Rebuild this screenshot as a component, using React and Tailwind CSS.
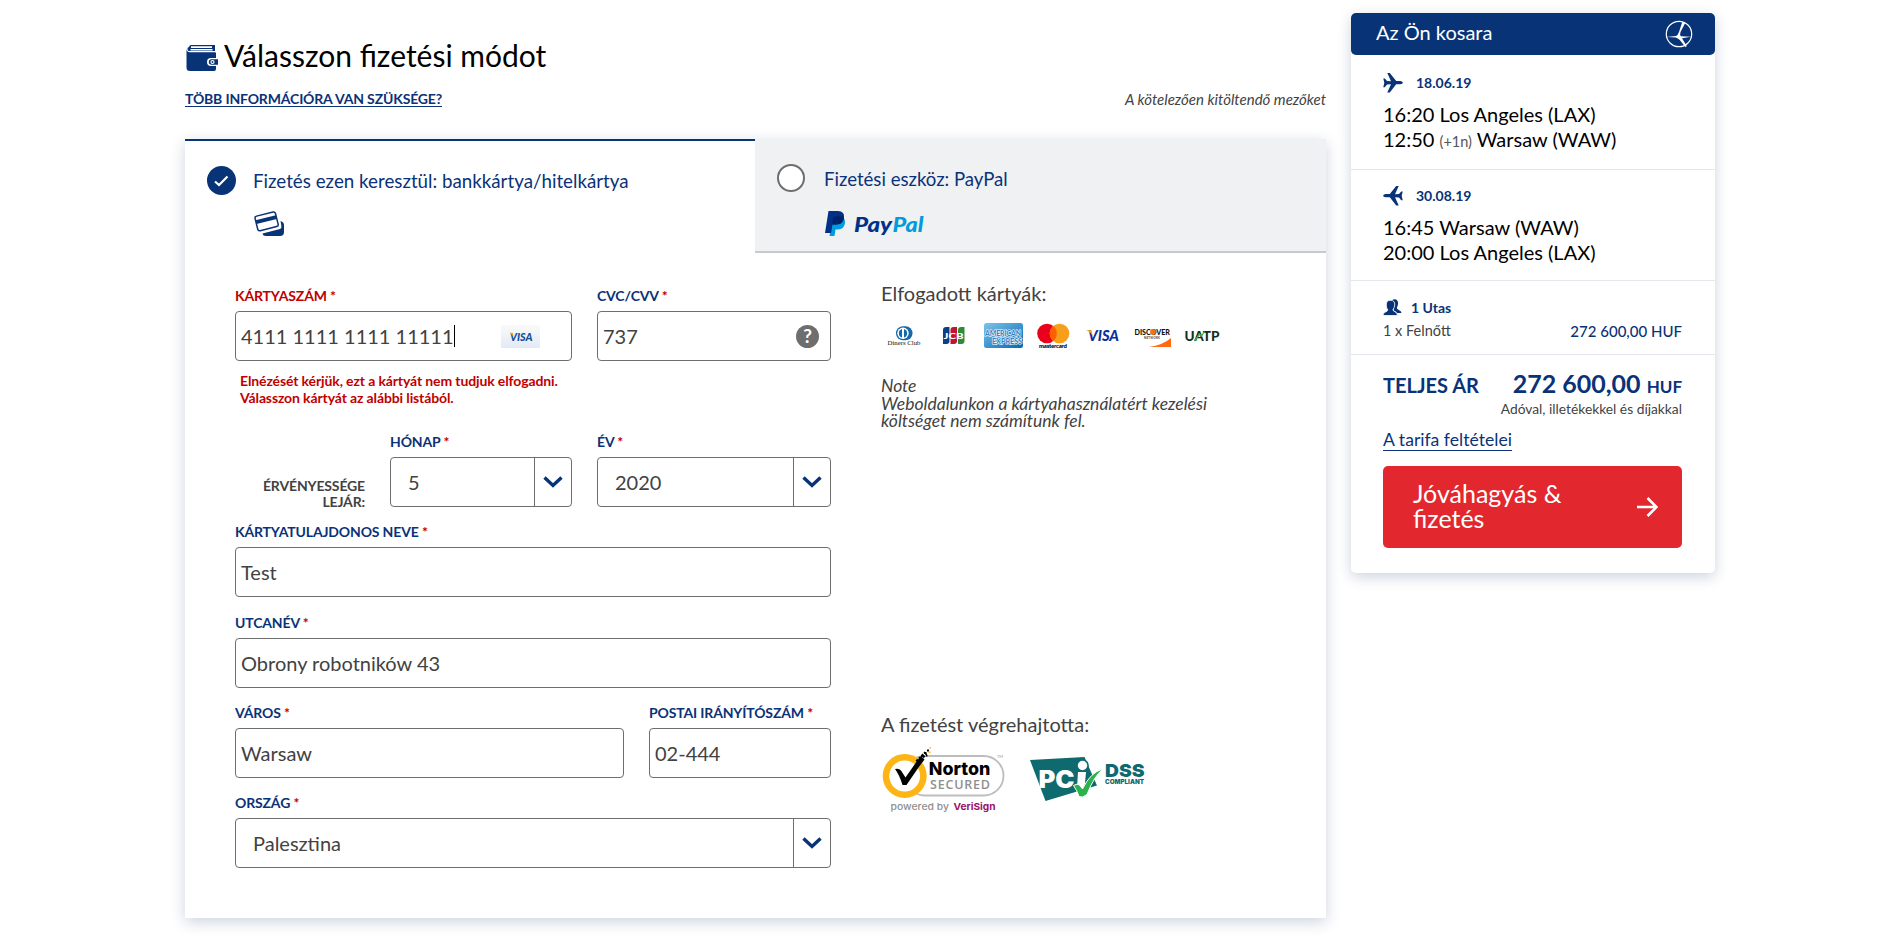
const NAVY = '#083377';

function Label({ children, className = '' }) {
  return (
    <div className={`h-5 whitespace-nowrap text-[14px] leading-5 font-bold tracking-[-0.15px] ${className || 'text-[#0a3278]'}`}>
      {children}
      <span className="text-[#c00000]"> *</span>
    </div>
  );
}

function Input({ children }) {
  return (
    <div className="flex h-[50px] items-center rounded-[4px] border border-[#6e6e6e] pl-[5px] text-[20px] leading-6 whitespace-nowrap text-[#424242]">
      {children}
    </div>
  );
}

function Select({ children }) {
  return (
    <div className="flex h-[50px] rounded-[4px] border border-[#6e6e6e] text-[20px] text-[#424242]">
      <div className="flex flex-1 items-center pl-[17px] leading-6">{children}</div>
      <div className="flex w-[37px] items-center justify-center border-l border-[#6e6e6e]">
        <svg width="20" height="12" viewBox="0 0 20 12" fill="none" stroke={NAVY} strokeWidth="3.4">
          <path d="M1.500 1.500 10 9.500l8.500-8" />
        </svg>
      </div>
    </div>
  );
}

function Wallet() {
  return (
    <svg width="32" height="26" viewBox="0 0 32 26">
      <path fill={NAVY} d="M5 0h24v6H4a2 2 0 0 1-1-4Q3.500 0 5 0Z" />
      <path stroke="#fff" strokeWidth="1.600" d="M5 2.100h21M4.500 4.700h22" />
      <path fill={NAVY} d="M.5 4Q1 7.300 4 7.300h25a1 1 0 0 1 1 1V13h-5a4 4 0 0 0 0 8h5v3a2 2 0 0 1-2 2H4a3.500 3.500 0 0 1-3.500-3.500Z" />
      <path fill={NAVY} d="M25.500 14.300H32v5.400h-6.500a2.700 2.700 0 0 1 0-5.400Z" />
      <circle cx="26.500" cy="17" r="1.500" fill={NAVY} stroke="#fff" strokeWidth="1.200" />
    </svg>
  );
}

function CardsIcon() {
  return (
    <svg width="31" height="26" viewBox="0 0 31 26">
      <path fill={NAVY} d="M26.500 10q3.500 1 3.500 4v7q0 4-4 4H12q-3 0-3.500-2.500L26 18q2-1 1.300-3.500Z" />
      <g transform="rotate(-14 12 10)">
        <rect x="2" y="3" width="21" height="15" rx="2" fill="#fff" stroke={NAVY} strokeWidth="1.500" />
        <path fill={NAVY} d="M2 6.800h21v3.800H2z" />
      </g>
    </svg>
  );
}

function PayPal() {
  return (
    <svg width="100" height="26" viewBox="0 0 100 26">
      <path fill="#009cde" d="M8 6h10q3 3 1.500 8-1.500 4.500-7.500 4.500h-1.500L9.500 25H4.500Z" />
      <path fill="#003087" d="M3.500 0H13q6.500.5 6 6-1 7.500-8.500 7.500H7.500L6 22H0Z" />
      <path fill="#012169" d="M8.500 5.500H18q1 1 .9 2.500-1.500 5.500-8 5.500H7.300Z" />
      <g fontFamily="Lato, sans-serif" fontWeight="900" fontStyle="italic" fontSize="21">
        <text x="29" y="21" fill="#003087" textLength="38" lengthAdjust="spacingAndGlyphs">Pay</text>
        <text x="67.500" y="21" fill="#009cde" textLength="31" lengthAdjust="spacingAndGlyphs">Pal</text>
      </g>
    </svg>
  );
}

function AcceptedCards() {
  return (
    <svg width="350" height="30" viewBox="882 321 350 30" fontFamily="Lato, sans-serif">
      {/* Diners Club */}
      <path fill="#1668a9" d="M903 326.300h2.500a7 7 0 0 1 0 14H903a7 7 0 0 1 0-14Z" />
      <circle cx="903" cy="333.300" r="5.700" fill="#fff" />
      <path fill="#1668a9" d="M902 329a4.500 4.500 0 0 0 0 8.600ZM904 329a4.500 4.500 0 0 1 0 8.600Z" />
      <text x="887.500" y="345" fontSize="6.800" fontFamily="Liberation Serif, serif" fill="#111" textLength="33">Diners Club</text>
      {/* JCB */}
      <path fill="#0b3f86" d="M946 327h3.500v14q0 3-3 3H943v-14q0-3 3-3Z" />
      <path fill="#c4122f" d="M953.500 327h3.500v14q0 3-3 3h-3.500v-14q0-3 3-3Z" />
      <path fill="#2e8b3a" d="M961 327h3.500v14q0 3-3 3H958v-14q0-3 3-3Z" />
      <text x="943.500" y="338.500" fontSize="8" fontWeight="900" fill="#fff" textLength="20" lengthAdjust="spacingAndGlyphs">JCB</text>
      {/* American Express */}
      <defs>
        <linearGradient id="amex" x1="0" y1="0" x2="1" y2="1">
          <stop offset="0" stopColor="#7cc4ea" />
          <stop offset="1" stopColor="#0568b3" />
        </linearGradient>
      </defs>
      <rect x="984" y="323" width="39" height="25" rx="2.500" fill="url(#amex)" />
      <g fontSize="8" fontWeight="900" fill="#2f86c6" stroke="#fff" strokeWidth="1.200" paintOrder="stroke">
        <text x="985" y="335.500" textLength="36" lengthAdjust="spacingAndGlyphs">AMERICAN</text>
        <text x="992" y="343.800" textLength="30" lengthAdjust="spacingAndGlyphs">EXPRESS</text>
      </g>
      {/* Mastercard */}
      <circle cx="1047" cy="333.500" r="9.800" fill="#eb001b" />
      <circle cx="1059.500" cy="333.500" r="9.800" fill="#f79e1b" />
      <path fill="#ff5f00" d="M1053.250 326a9.800 9.800 0 0 1 0 15 9.800 9.800 0 0 1 0-15Z" />
      <text x="1039" y="348" fontSize="6" fontWeight="900" fill="#000" textLength="28">mastercard</text>
      {/* Visa */}
      <text x="1088" y="341" fontSize="15" fontWeight="900" fontStyle="italic" fill="#0e2f99" textLength="31" lengthAdjust="spacingAndGlyphs">VISA</text>
      <path fill="#f9a51a" d="M1086 330.300h5l2 6q-2-4-7-6Z" />
      {/* Discover */}
      <text x="1134.500" y="335" fontSize="8" fontWeight="900" fill="#111" textLength="35.500" lengthAdjust="spacingAndGlyphs">DISCOVER</text>
      <circle cx="1153" cy="332" r="2.900" fill="#f47216" />
      <text x="1144" y="339" fontSize="2.800" fontWeight="700" fill="#333" textLength="16">NETWORK</text>
      <path fill="#ff6a13" d="M1171 338v9h-22q14-2 22-9Z" />
      {/* UATP */}
      <text x="1184.500" y="341" fontSize="14" fontWeight="900" fill="#13301f" textLength="35" lengthAdjust="spacingAndGlyphs">UATP</text>
      <path stroke="#3fae49" strokeWidth="1.300" fill="none" d="M1194.500 341l5-7 2 2 3-4.500" />
    </svg>
  );
}

function Norton() {
  return (
    <svg width="124" height="68" viewBox="882 746 124 68">
      <rect x="905" y="756" width="98.500" height="39.500" rx="19.700" fill="#fff" stroke="#bdbdbd" strokeWidth="1.800" />
      <circle cx="904.700" cy="776" r="18.700" fill="#fff" stroke="#fdb515" strokeWidth="6.600" />
      <path fill="#000" d="M895 769q4-1 6 1.500l4.500 7L917 761l4-5 3.500 3.500-6 8-12 17.500h-4q-3-10-7.500-16Z" />
      <path stroke="#000" strokeWidth="4" strokeDasharray="2.500 1.200" fill="none" d="M917 762l9-9" />
      <path fill="#000" d="M921 755h2v2h-2zM924 752h2.500v2H924zM927 749.500h2v2h-2zM926 755h1.500v1.500H926z" />
      <path fill="#fdb515" d="M929.500 747h1.500v1.500h-1.500zM928.500 751.500h2v1.500h-2z" />
      <text x="928.800" y="775" fontFamily="Inter, sans-serif" fontWeight="800" fontSize="18" fill="#000" textLength="61.500" lengthAdjust="spacingAndGlyphs">Norton</text>
      <text x="930" y="788.700" fontFamily="Open Sans, sans-serif" fontSize="12.500" fontWeight="600" fill="#8f8f8f" textLength="60">SECURED</text>
      <text x="997" y="758" fontFamily="Lato, sans-serif" fontSize="4" fill="#999">TM</text>
      <g fontFamily="Inter, sans-serif" fontSize="9.500">
        <text x="890.500" y="810.300" fill="#8f8f8f" fontWeight="500" textLength="58.500" lengthAdjust="spacingAndGlyphs">powered by</text>
        <text x="953.500" y="810.300" fill="#9b0f6b" fontWeight="700" textLength="42" lengthAdjust="spacingAndGlyphs">VeriSign</text>
      </g>
    </svg>
  );
}

function Pci() {
  return (
    <svg width="117" height="46" viewBox="1029 756 117 46" fontFamily="Inter, sans-serif">
      <path fill="#0f6a70" d="M1030 760 1084.500 757l12.500 28.500-51.500 15.500Z" />
      <circle cx="1082.500" cy="765.500" r="6.300" fill="#0f6a70" />
      <text x="1038.500" y="788.300" fontWeight="900" fontSize="24" fill="#fff" textLength="36" lengthAdjust="spacingAndGlyphs">PC</text>
      <circle cx="1082.500" cy="765.500" r="4.700" fill="#fff" />
      <path fill="#fff" d="M1078 772h8l-1.500 16.500h-7.500Z" />
      <path fill="#2bb24c" stroke="#fff" strokeWidth="1" d="M1073.500 785.500q4-2.500 6-.5l3 4q8-17 20.500-20-9 7-16 25.500-5 4-8 2-2-6-5.500-11Z" />
      <text x="1105" y="777.300" fontWeight="900" fontSize="18" fill="#0f6a70" textLength="39.500" lengthAdjust="spacingAndGlyphs">DSS</text>
      <text x="1105" y="784" fontWeight="900" fontSize="6" fill="#0f6a70" textLength="39" lengthAdjust="spacingAndGlyphs">COMPLIANT</text>
    </svg>
  );
}

function Plane({ back }) {
  return (
    <svg width="20" height="20" viewBox="0 0 20 20" fill={NAVY} className={back ? '-scale-x-100' : ''}>
      <path d="M.3 5.500h1.500L4 8.100l4 .2L4.300 0h2.500l6.400 8.100h4.300q2 .6 2.500 1.600-.5 1-2.500 1.600h-4.300L6.800 19.500H4.300L8 11.300l-4 .2-2.200 2.800H.3l1-4.500Z" />
    </svg>
  );
}

function People() {
  return (
    <svg width="19" height="17" viewBox="0 0 19 17" fill={NAVY}>
      <path d="M9 1.200Q11-.5 13.200.5q2.300 1.300 1.800 4.500-.3 2.500-1.200 3.800.2 1.500 2 2.200 2.500 1 2.700 3H14q-.5-1.500-3-2.500Z" />
      <path stroke="#fff" strokeWidth=".8" d="M7.500 1.300q4.500 0 4.200 4.700-.3 3-1.700 4.500 0 1.500 1.500 2 3 1.200 3 4H0q0-2.800 3-3.800 1.800-.6 1.700-2Q3.300 9 3.300 6q-.2-4.700 4.200-4.700Z" />
    </svg>
  );
}

function Crane() {
  return (
    <svg width="28" height="28" viewBox="0 0 28 28">
      <circle cx="14" cy="14" r="12.700" fill="none" stroke="#fff" strokeWidth="1.200" />
      <path fill="#fff" d="M1.500 17 11 16q2-1 3-4l3.300-10.300 3 1L15.500 12q-1 3 .5 4.300l10 .4-9 1.500 4.800 8-1.500.8-5.500-7q-2-2-4-2.500Z" />
    </svg>
  );
}

function Flight({ date, back, className, children }) {
  return (
    <div className={`border-b border-[#e4e7eb] px-8 ${className}`}>
      <div className="flex h-5 items-center text-[14px] leading-5 font-bold text-[#0a3278]">
        <Plane back={back} />
        <span className="ml-[13px]">{date}</span>
      </div>
      <div className="pt-[9px] text-[20px] leading-[25px] whitespace-nowrap text-black">{children}</div>
    </div>
  );
}

export default function App() {
  return (
    <div className="flex h-[940px] items-start overflow-hidden bg-white pl-[185px] font-[Lato,sans-serif] text-[#424242]">
      <main className="w-[1141px]">
        <div className="flex h-[80px] pt-[34px]">
          <div className="pt-[11px] pl-px"><Wallet /></div>
          <h1 className="ml-[6px] text-[30px] leading-[42px] whitespace-nowrap text-black">Válasszon fizetési módot</h1>
        </div>
        <div className="flex h-[59px] justify-between pt-2">
          <a className="h-[19px] border-b border-[#0a3278] text-[14px] leading-[21px] font-bold tracking-[-0.16px] whitespace-nowrap text-[#0a3278]">TÖBB INFORMÁCIÓRA VAN SZÜKSÉGE?</a>
          <span className="-mt-px text-[15px] leading-6 italic">A kötelezően kitöltendő mezőket</span>
        </div>
        <div className="h-[779px] bg-white shadow-[0_4px_14px_rgba(5,35,90,0.2)]">
          <div className="flex h-[114px]">
            <div className="flex w-[570px] border-t-2 border-[#083377] pl-[22px]">
              <div className="mt-[25px] flex size-[29px] items-center justify-center rounded-full bg-[#083377]">
                <svg width="15" height="12" viewBox="0 0 15 12" fill="none" stroke="#fff" strokeWidth="2.200"><path d="M1 6.500 5 10l8.500-8.500" /></svg>
              </div>
              <div className="ml-[17px] pt-[28px] text-[18.750px] leading-6 whitespace-nowrap text-[#0a3278]">
                Fizetés ezen keresztül: bankkártya/hitelkártya
                <div className="mt-[18px] ml-px"><CardsIcon /></div>
              </div>
            </div>
            <div className="flex flex-1 border-b-2 border-[#c5c9d0] bg-[#f0f1f3] pl-[22px]">
              <div className="mt-[25px] size-[28px] rounded-full border-2 border-[#6e6e6e] bg-white" />
              <div className="ml-[19px] pt-[28px] text-[18.600px] leading-6 whitespace-nowrap text-[#0a3278]">
                Fizetési eszköz: PayPal
                <div className="mt-[20px] ml-px"><PayPal /></div>
              </div>
            </div>
          </div>
          <div className="flex pl-[50px]">
            <div className="w-[596px] pt-[33px]">
              <div className="flex gap-[25px]">
                <div className="w-[337px]">
                  <Label className="text-[#c00000]">KÁRTYASZÁM</Label>
                  <div className="mt-[5px]">
                    <Input>
                      <span className="border-r border-black leading-[22px]">4111 1111 1111 11111</span>
                      <svg width="39" height="23" viewBox="0 0 39 23" className="mr-[31px] ml-auto">
                        <defs><linearGradient id="v" x1="0" y1="0" x2="0" y2="1"><stop offset="0" stopColor="#fafafa" /><stop offset="1" stopColor="#e3eaf4" /></linearGradient></defs>
                        <rect width="39" height="23" rx="1" fill="url(#v)" />
                        <text x="9" y="15.500" fontFamily="Lato, sans-serif" fontSize="11" fontWeight="900" fontStyle="italic" fill="#10509a" textLength="22.500" lengthAdjust="spacingAndGlyphs">VISA</text>
                        <path fill="#f2a21b" d="M8.500 7.800h3l1 3.500Z" />
                      </svg>
                    </Input>
                  </div>
                </div>
                <div className="w-[234px]">
                  <Label>CVC/CVV</Label>
                  <div className="mt-[5px]">
                    <Input>
                      <span>737</span>
                      <span className="mr-[11px] ml-auto flex size-[23px] items-center justify-center rounded-full bg-[#6e6e6e] text-[19px] leading-5 font-bold text-white">?</span>
                    </Input>
                  </div>
                </div>
              </div>
              <div className="h-[71px] pt-[11px] pl-[5px] text-[14px] leading-[17px] font-bold tracking-[-0.12px] text-[#c00000]">
                Elnézését kérjük, ezt a kártyát nem tudjuk elfogadni.<br />Válasszon kártyát az alábbi listából.
              </div>
              <div className="flex h-[75px]">
                <div className="w-[130px] pt-[46px] text-right text-[14px] leading-4 font-bold tracking-[-0.15px]">ÉRVÉNYESSÉGE<br />LEJÁR:</div>
                <div className="ml-[25px] w-[182px]"><Label>HÓNAP</Label><div className="mt-[5px]"><Select>5</Select></div></div>
                <div className="ml-[25px] w-[234px]"><Label>ÉV</Label><div className="mt-[5px]"><Select>2020</Select></div></div>
              </div>
              <div className="mt-[15px]"><Label>KÁRTYATULAJDONOS NEVE</Label><div className="mt-[5px]"><Input>Test</Input></div></div>
              <div className="mt-4"><Label>UTCANÉV</Label><div className="mt-[5px]"><Input>Obrony robotników 43</Input></div></div>
              <div className="mt-[15px] flex gap-[25px]">
                <div className="w-[389px]"><Label>VÁROS</Label><div className="mt-[5px]"><Input>Warsaw</Input></div></div>
                <div className="w-[182px]"><Label>POSTAI IRÁNYÍTÓSZÁM</Label><div className="mt-[5px]"><Input>02-444</Input></div></div>
              </div>
              <div className="mt-[15px]"><Label>ORSZÁG</Label><div className="mt-[5px]"><Select>Palesztina</Select></div></div>
            </div>
            <div className="ml-[50px] w-[350px] pt-[28px]">
              <div className="text-[20px] leading-6">Elfogadott kártyák:</div>
              <div className="mt-4 ml-px"><AcceptedCards /></div>
              <p className="mt-[26px] text-[17.500px] leading-[17.500px] whitespace-nowrap italic">Note<br />Weboldalunkon a kártyahasználatért kezelési<br />költséget nem számítunk fel.</p>
              <div className="mt-[282px] text-[20px] leading-6">A fizetést végrehajtotta:</div>
              <div className="mt-[10px] ml-px flex">
                <Norton />
                <div className="ml-[23px] pt-[10px]"><Pci /></div>
              </div>
            </div>
          </div>
        </div>
      </main>
      <aside className="mt-[13px] ml-[25px] h-[560px] w-[364px] rounded-[5px] bg-white shadow-[0_4px_14px_rgba(5,35,90,0.2)]">
        <div className="flex h-[42px] items-center justify-between rounded-[5px] bg-[#083377] pr-[22px] pl-[25px] text-[20px] text-white">
          <span className="-mt-1 leading-6">Az Ön kosara</span>
          <Crane />
        </div>
        <Flight date="18.06.19" className="h-[115px] pt-[18px]">16:20 Los Angeles (LAX)<br />12:50 <span className="text-[14.500px] leading-none text-[#555]">(+1n)</span> Warsaw (WAW)</Flight>
        <Flight back date="30.08.19" className="h-[111px] pt-4">16:45 Warsaw (WAW)<br />20:00 Los Angeles (LAX)</Flight>
        <div className="h-[74px] border-b border-[#e4e7eb] px-8 pt-[17px]">
          <div className="flex h-[18px] items-center text-[14px] font-bold text-[#0a3278]"><People /><span className="ml-[9px]">1 Utas</span></div>
          <div className="flex justify-between pt-[4px] pr-px leading-[22px]">
            <span className="text-[14.500px]">1 x Felnőtt</span>
            <span className="text-[15px] font-medium text-[#0a3278]">272 600,00 HUF</span>
          </div>
        </div>
        <div className="pt-[13px] pr-[33px] pl-8">
          <div className="flex h-[31px] items-baseline justify-between leading-[30px] font-bold whitespace-nowrap text-[#0a3278]">
            <span className="text-[20px]">TELJES ÁR</span>
            <span className="text-[25px]">272 600,00 <span className="text-[17px] leading-none">HUF</span></span>
          </div>
          <div className="text-right text-[13.800px] leading-5">Adóval, illetékekkel és díjakkal</div>
          <div className="mt-[9px] h-[27px]"><a className="inline-block h-[23px] border-b border-[#0a3278] align-top text-[17.600px] leading-6 text-[#0a3278]">A tarifa feltételei</a></div>
          <button className="mt-[11px] flex h-[82px] w-full items-center justify-between rounded-[5px] bg-[#e2272f] pr-[24px] pl-[30px] text-left text-[25px] leading-[25px] text-white">
            <span className="-mt-[2px]">Jóváhagyás &amp;<br />fizetés</span>
            <svg width="21" height="20" viewBox="0 0 21 20" fill="none" stroke="#fff" strokeWidth="2.600"><path d="M0 10h19M10.500 1l9 9-9 9" /></svg>
          </button>
        </div>
      </aside>
    </div>
  );
}
